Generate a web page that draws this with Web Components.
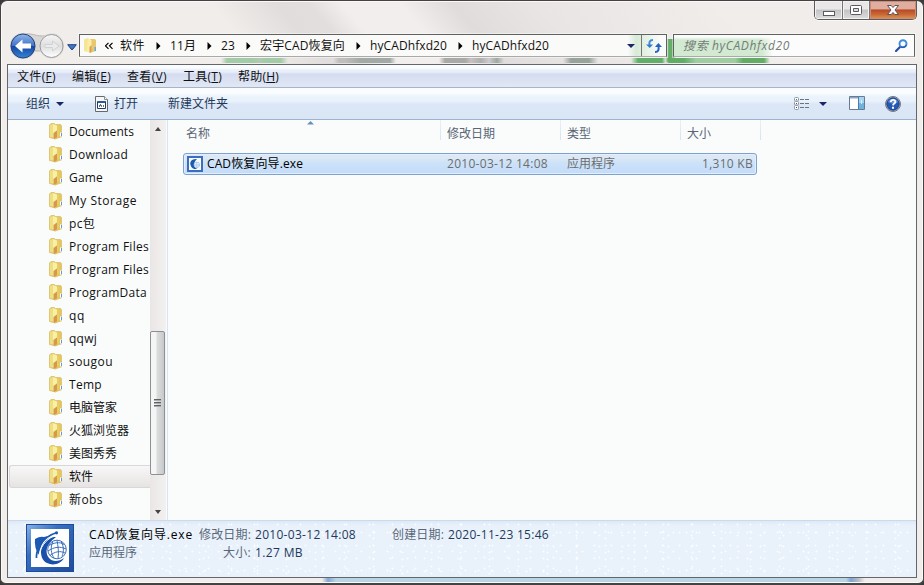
<!DOCTYPE html>
<html lang="zh-CN">
<head>
<meta charset="utf-8">
<title>hyCADhfxd20</title>
<style>
  html, body { margin: 0; height: 100%; background: #3b3a3b; overflow: hidden; }
  body { font: 12px/16px "Open Sans", "Noto Sans CJK SC", sans-serif; color: #111; }
</style>
</head>
<body>
<explorer-window>
  <title-bar></title-bar>
  <nav-row></nav-row>
  <client-area>
    <menu-bar></menu-bar>
    <command-bar></command-bar>
    <folder-tree slot="side"></folder-tree>
    <scroll-bar slot="side"></scroll-bar>
    <file-list slot="main"></file-list>
    <details-pane slot="foot"></details-pane>
  </client-area>
</explorer-window>

<script>
const define = (name, html, setup) => {
  customElements.define(name, class extends HTMLElement {
    constructor() {
      super();
      this.attachShadow({ mode: "open" });
    }

    connectedCallback() {
      this.shadowRoot.innerHTML = html.trim();
      if (setup) setup(this);
    }
  });
};

// label that spreads its letters over the width given in "w"
define("fit-text", `
  <style>:host { display: inline-block; white-space: pre; flex: none; justify-self: start; line-height: 16px; height: 16px; }</style><slot></slot>
`, (el) => {
  const w = parseFloat(el.getAttribute("w"));
  if (!w) return;
  const natural = el.getBoundingClientRect().width;
  el.style.letterSpacing = `${(w - natural) / el.textContent.length}px`;
});

const icons = {
  folder: [14, 17, `
    <path d="M.5 2 2 .5h3.500l1 1h5l1 1v11.500l-2.500.5-3.500 1.500L.5 14.500z" fill="#e3c460" stroke="#dcc067" stroke-width=".8"/>
    <path d="M1 2 4 1v13.500L1 14z" fill="#efdf83"/>
    <path d="M4 1 8 2.500v5L6.500 9v6.500L4 14.500z" fill="#f8f0a5"/>
    <path d="M4.500 10 8 7.500V14l-2.500 2-1-1z" fill="#d6994b"/>
    <path d="M8 2.500h2.500V13L8 14z" fill="#e9cc66"/>
    <path d="M11 9.500h1.500v4H11z" fill="#fff"/><path d="M12 10h1v3h-1z" fill="#5a9de0"/>`],
  openFolder: [14, 17, `
    <path d="M1 2.500 5 1v14l-4-1z" fill="#f5e596"/>
    <path d="M6 2h5.500l1.500 1v11l-5 1.500H6z" fill="#e8c86b"/>
    <path d="M5 1 8.500 3v6L7 16l-3-1.500z" fill="#faedaa"/>
    <path d="M6.500 10 8.500 8v7l-2 1z" fill="#d9a050"/>
    <path d="M11.500 10h1.500v4h-1.500z" fill="#66a7e4"/>`],
  app: [16, 16, `
    <rect width="16" height="16" fill="#3b6fbb"/><path d="M2 2h12v12H2z" fill="#f7fbff"/>
    <path d="M10 3C5 2.500 2.500 5.500 3.500 9s4 4.500 7 4C7.500 12 5.500 7 10 3z" fill="#1c5ab0"/>
    <circle cx="9.800" cy="8.800" r="2.800" fill="#e6effa" stroke="#a5c1e6" stroke-width=".8"/>
    <path d="M7 9h6M9.800 6v6" stroke="#9bbbe2" stroke-width=".6"/>`],
  appLarge: [48, 48, `
    <defs><linearGradient id="g" x2="1" y2="1"><stop stop-color="#87b1e4"/><stop offset=".35" stop-color="#376fc0"/><stop offset="1" stop-color="#1f4b9d"/></linearGradient></defs>
    <rect width="48" height="48" fill="#1d4b9c"/><rect x="1" y="1" width="46" height="46" fill="url(#g)"/>
    <path d="M5 5h38v38H5z" fill="#fff"/>
    <path d="M9 15q5-3 9-2l4-1q-8 8-9 19-5-7-4-16z" fill="#1c59b2"/>
    <path d="M31 8.500Q19 12 13.500 22 10 29 10.500 34" fill="none" stroke="#1c59b2" stroke-width="1.800"/>
    <path d="M30 13c-8-1-15 7-15 15 0 5 2 9 6 11 6 3 14 1 17-5-5 4-12 4-15 0-4-5-4-13 7-21z" fill="#1850aa"/>
    <path d="M28 12C19 16 14 24 13 32" fill="none" stroke="#fff" stroke-width="1"/>
    <circle cx="30.500" cy="8.800" r="1.600" fill="#1c59b2"/>
    <circle cx="31" cy="25.500" r="9.300" fill="#fff" stroke="#2861b5" stroke-width=".9"/>
    <g fill="none" stroke="#2861b5" stroke-width=".9">
      <path d="M23 21.500c5-3 11-4 15-1M22 27c6-4 12-5 18-2M24 31.500c5-4 10-5 15-2.500"/>
      <path d="M27 17.500c-3 6-2 12 1 16.500M31 16.500c1 5 2 12 1 18M35 17.500c3 5 3 10 1 15"/>
    </g>`],
  openFile: [15, 16, `
    <path d="M1.500.5h9l3 3v12h-12z" fill="#f5f6f7" stroke="#65696d"/><path d="M10.500.5v3h3" fill="#fff" stroke="#898d91"/>
    <path d="M3.500 5.500h8v7h-8z" fill="#fff" stroke="#243d65"/><path d="M4 5h7v2H4z" fill="#31598e"/>
    <path d="M5 9h1v2H5z" fill="#4771b9"/><path d="M6 8h1v2H6z" fill="#4771b9"/><path d="M7 9h1v2H7z" fill="#cd5a3d"/><path d="M9 9h1v2H9z" fill="#3c8b51"/>`],
  views: [17, 14, `
    <g fill="#fff" stroke="#8a98ab"><rect x=".5" y=".5" width="4" height="3.500" rx="1"/><rect x=".5" y="4.500" width="4" height="3.500" rx="1"/><rect x=".5" y="8.500" width="4" height="4" rx="1"/></g>
    <path d="M2 2h1v1H2z" fill="#36894b"/><path d="M2 6h1v1H2z" fill="#a33829"/><path d="M2 10h1v1H2z" fill="#294aa3"/>
    <path d="M6 2.500h4m1 0h4M6 6.500h4m1 0h4M6 10.500h4m1 0h4" stroke="#6a7584"/>`],
  preview: [17, 15, `
    <path d="M.5.5h15v13H.5z" fill="#fff" stroke="#687b94"/><path d="M1 1h9v2H1z" fill="#c9d4e2"/><path d="M1 1.500h9" stroke="#8ea5c4"/>
    <path d="M10 1h5v12h-5z" fill="#a5d5ef"/><path d="M10 7h5v6h-5z" fill="#6db3dc"/><path d="M9.500 1v12" stroke="#4f7ba9"/><path d="M12 4h1v4h-1z" fill="#d5eefa"/>`],
  help: [16, 16, `
    <circle cx="8" cy="8" r="7.500" fill="#c3cad3" stroke="#707984"/><circle cx="8" cy="8" r="6.200" fill="#2559b6" stroke="#173f86"/>
    <path d="M3 6a5.500 5.500 0 0 1 10 0c-3 2-6 2-10 0z" fill="#6791d8"/>
    <path d="M5.800 6c0-3 4.700-2.800 4.500-.1C10.200 7.600 8.100 7.300 8 9.400" fill="none" stroke="#fff" stroke-width="1.800"/><path d="M7 10.800h2v1.900H7z" fill="#fff"/>`],
  down: [8, 4, `<path d="M0 0h8L4 4z" fill="#17276a"/>`],
  refresh: [16, 14, `
    <path d="M7 1C3.500 1 3 3 3.500 7" fill="none" stroke="#438bd9" stroke-width="2"/><path d="M0 5.500h7L3.800 9z" fill="#347bd0"/>
    <path d="M9 13c3.500 0 4-2 3.500-6" fill="none" stroke="#2664c3" stroke-width="2"/><path d="M9 8h7l-3.700-4z" fill="#2461c0"/>`],
  search: [14, 13, `
    <path d="m1 12 5-5" stroke="#244caa" stroke-width="2.200" stroke-linecap="round"/><circle cx="8" cy="4.700" r="3.500" fill="#f6fbff" stroke="#4289d9" stroke-width="1.900"/>
    <path d="M5.700 7.600a3.600 3.600 0 0 0 5.500-1.500" fill="none" stroke="#2861b9" stroke-width="1.500"/>`],
  travel: [64, 28, `
    <defs><linearGradient id="b" x2="0" y2="1"><stop stop-color="#91b6e9"/><stop offset=".48" stop-color="#4275ca"/><stop offset=".52" stop-color="#1747a1"/><stop offset="1" stop-color="#3386d9"/></linearGradient>
    <linearGradient id="f" x2="0" y2="1"><stop stop-color="#f6f6f6"/><stop offset=".5" stop-color="#dedede"/><stop offset="1" stop-color="#fff"/></linearGradient></defs>
    <path d="M14 2c10-1 12 2 19 2s10-3 15-1v16H14z" fill="#d9d7d6" stroke="#b9b7b6"/>
    <circle cx="14" cy="14" r="13" fill="#c9cbd0"/><circle cx="14" cy="14" r="12" fill="url(#b)" stroke="#294474"/>
    <path d="M6 14 13.500 7.500v4H22v5h-8.500v4z" fill="#fff"/>
    <circle cx="42.500" cy="14" r="12.500" fill="#dcdad9"/>
    <circle cx="42.500" cy="14" r="11.500" fill="url(#f)" stroke="#9a9a9c"/>
    <path d="M50 14 43.500 9v3.500H36v3h7.500V19z" fill="#ecebeb" stroke="#d3d2d2"/>`],
  history: [10, 7, `<path d="M.7.7h8.600L6 5Q5 6.500 4 5z" fill="#3d79cb" stroke="#24417a"/>`],
  crumb: [5, 8, `<path d="M.5 0 4.500 4l-4 4z" fill="#000"/>`],
  more: [8, 8, `<path d="m3.500.8-3 3 3 3M7.500.8l-3 3 3 3" fill="none" stroke="#000" stroke-width="1.200"/>`],
  min: [12, 5, `<rect x=".5" y=".5" width="11" height="4" fill="#fff" stroke="#5a5a60"/>`],
  max: [12, 10, `<rect x=".5" y=".5" width="11" height="9" rx="1" fill="#fff" stroke="#5a5a60"/><path d="M3.500 3.500h5v3h-5z" fill="#ddd" stroke="#5a5a60"/>`],
  close: [12, 10, `<path d="M.5.500h3.700L6 2.500 7.800.500h3.700L8 5l3.500 4.500H7.800L6 7.500 4.200 9.500H.5L4 5z" fill="#fff" stroke="#5d5357"/>`]
};

customElements.define("ui-icon", class extends HTMLElement {
  constructor() {
    super();
    this.attachShadow({ mode: "open" });
  }

  connectedCallback() {
    const [w, h, body] = icons[this.getAttribute("name")];
    this.shadowRoot.innerHTML = `
      <style>:host { display: block; flex: none; width: ${w}px; height: ${h}px; } svg { display: block; }</style>
      <svg width="${w}" height="${h}" viewBox="0 0 ${w} ${h}">${body}</svg>`;
  }
});

define("explorer-window", `
  <style>
    :host {
      display: flex; flex-direction: column; box-sizing: border-box; width: 924px; height: 585px;
      border: 1px solid #444243; border-bottom-width: 2px; border-radius: 7px 7px 6px 6px; overflow: hidden;
      box-shadow: inset 0 0 0 1px #fbf9f8;
      background:
        linear-gradient(90deg, transparent 321px, #85a6cf 327px, #b9d5e5 335px, #b9d5e5 845px, #7da5d3 850px, #c0c0c4 858px, transparent 864px) 0 577px / 922px 5px no-repeat,
        linear-gradient(50deg, transparent 200px, #e1dddc 250px, #e2dedd 275px, #f1eeed 300px, #f1eeed 345px, #dfdcdb 385px, #e9e5e4 450px, transparent 590px) 0 0 / 100% 64px no-repeat,
        #f0edeb;
    }
  </style>
  <slot></slot>
`);

define("title-bar", `
  <style>
    :host { display: flex; justify-content: flex-end; align-items: flex-start; height: 33px; padding-right: 6px; }
    .buttons { display: flex; box-sizing: border-box; height: 19px; width: 103px; border: 1px solid #5d5a5c; border-top: 0; border-radius: 0 0 5px 5px; overflow: hidden; box-shadow: 0 1px #faf8f7; }
    .buttons div { display: flex; align-items: center; justify-content: center; width: 27px; border-right: 1px solid #77747a; background: linear-gradient(#e9e7e7 0 45%, #c3c3c5 50%, #dedddd); box-shadow: inset 0 0 0 1px #f3f2f2; }
    .buttons div:nth-child(2) { width: 26px; }
    .buttons .close { flex: 1; border: 0; background: linear-gradient(#dfae9e 0 43%, #b94a28 50%, #c96935 75%, #dd9656); box-shadow: inset 0 0 0 1px #d28a73; }
    .low { margin-top: 6px; }
  </style>
  <div class="buttons">
    <div><ui-icon name="min" class="low"></ui-icon></div>
    <div><ui-icon name="max"></ui-icon></div>
    <div class="close"><ui-icon name="close"></ui-icon></div>
  </div>
`);

define("nav-row", `
  <style>
    :host {
      display: flex; height: 30px; padding: 0 7px 0 8px;
      background:
        linear-gradient(90deg, transparent 220px, #a2cba8 226px 250px, #b1c9b1 258px, #a2cba8 266px 280px, transparent 287px) 0 24px / 100% 5px no-repeat,
        linear-gradient(90deg, transparent 332px, #c0bebd 338px 344px, #a1aaa5 360px 389px, transparent 395px, transparent 438px, #a9a9a8 444px 464px, #c6c2c1 470px, #aeb0ae 480px, #ccc 488px, #a0a8a2 496px, transparent 503px, transparent 562px, #98a39c 570px 588px, transparent 597px, transparent 630px, #61af68 637px 661px, transparent 665px, #61ad66 668px 683px, #9fcca1 695px 734px, #61ad66 742px 763px, transparent 769px) 0 24px / 100% 5px no-repeat,
        linear-gradient(90deg, transparent 664px, #65ae69 668px 673px, transparent 675px) 0 5px / 100% 23px no-repeat;
    }
    .history { margin: 10px 0 0 -6px; }
    .travel { margin-top: -2px; }
    .address, .search { display: flex; align-items: center; box-sizing: border-box; height: 23px; border: 1px solid #5f6260; border-bottom-color: #aaa; box-shadow: 0 0 0 1px rgba(255,255,255,.45); background: #fafaf8; }
    .address { width: 588px; margin-left: 2px; padding-left: 3px; background: linear-gradient(90deg, transparent 548px, #d7ead7 556px, #e2f1e2 564px, #fafbfa 580px), #fafaf8; }
    .more { margin: 0 7px 0 8px; }
    .address fit-text { margin-right: 11px; }
    .crumb { margin-right: 9px; }
    .drop { margin-left: auto; margin-right: 6px; }
    .refresh { display: flex; align-items: center; justify-content: center; align-self: stretch; width: 24px; border-left: 1px solid #777; }
    .search { width: 242px; margin-left: 6px; padding: 0 5px 0 9px; color: #747c77; font-style: italic; background: linear-gradient(#fcfcfc 2px, transparent 5px), linear-gradient(90deg, #d2e9d2 88px, #fcfcfc 99px); }
    .search ui-icon { margin-left: auto; }
  </style>
  <ui-icon name="travel" class="travel"></ui-icon>
  <ui-icon name="history" class="history"></ui-icon>
  <div class="address">
    <ui-icon name="openFolder"></ui-icon>
    <ui-icon name="more" class="more"></ui-icon>
    <fit-text w="25">软件</fit-text><ui-icon name="crumb" class="crumb"></ui-icon>
    <fit-text w="26">11月</fit-text><ui-icon name="crumb" class="crumb"></ui-icon>
    <fit-text w="14">23</fit-text><ui-icon name="crumb" class="crumb"></ui-icon>
    <fit-text w="85">宏宇CAD恢复向</fit-text><ui-icon name="crumb" class="crumb"></ui-icon>
    <fit-text w="77">hyCADhfxd20</fit-text><ui-icon name="crumb" class="crumb"></ui-icon>
    <fit-text w="77">hyCADhfxd20</fit-text>
    <ui-icon name="down" class="drop"></ui-icon>
    <div class="refresh"><ui-icon name="refresh"></ui-icon></div>
  </div>
  <div class="search"><fit-text w="107">搜索 hyCADhfxd20</fit-text><ui-icon name="search"></ui-icon></div>
`);

define("client-area", `
  <style>
    :host { display: flex; flex-direction: column; box-sizing: border-box; width: 910px; height: 514px; margin-left: 6px; border: 1px solid #62676d; background: #fafcfc; }
    .body { display: flex; height: 400px; }
    .side { display: flex; box-sizing: border-box; width: 160px; border-right: 1px solid #d6e4f5; }
  </style>
  <slot></slot>
  <div class="body"><div class="side"><slot name="side"></slot></div><slot name="main"></slot></div>
  <slot name="foot"></slot>
`);

define("menu-bar", `
  <style>
    :host { display: flex; align-items: center; gap: 16px; box-sizing: border-box; height: 23px; padding: 2px 0 0 9px; border-bottom: 1px solid #a9b4c8; background: linear-gradient(#fbfcfe 0 3px, #e9effa 5px 7px, #d5dcef 9px, #dbe3f3 16px, #e0e8f6); }
    u { text-underline-offset: 1px; }
  </style>
  <fit-text w="39">文件(<u>F</u>)</fit-text>
  <fit-text w="39">编辑(<u>E</u>)</fit-text>
  <fit-text w="40">查看(<u>V</u>)</fit-text>
  <fit-text w="39">工具(<u>T</u>)</fit-text>
  <fit-text w="41">帮助(<u>H</u>)</fit-text>
`);

define("command-bar", `
  <style>
    :host { display: flex; align-items: center; box-sizing: border-box; height: 32px; padding: 0 15px 0 18px; color: #1e395b; border-bottom: 1px solid #a0b3cc; background: linear-gradient(#fafdff 0 5px, #eaf2fb 9px 13px, #dce7f6 16px, #d9e6f6); }
    fit-text { padding-top: 1px; }
    .down { margin-left: 6px; }
    .file { margin: 0 5px 0 30px; }
    .new { margin-left: 30px; }
    .right { display: flex; align-items: center; margin-left: auto; }
    .right .down { margin: 0 22px 0 8px; }
    .help { margin-left: 19px; }
  </style>
  <fit-text w="24">组织</fit-text><ui-icon name="down" class="down"></ui-icon>
  <ui-icon name="openFile" class="file"></ui-icon><fit-text w="24">打开</fit-text>
  <fit-text w="60" class="new">新建文件夹</fit-text>
  <div class="right">
    <ui-icon name="views"></ui-icon><ui-icon name="down" class="down"></ui-icon>
    <ui-icon name="preview"></ui-icon><ui-icon name="help" class="help"></ui-icon>
  </div>
`);

const folders = [
  ["Documents", 65], ["Download", 59], ["Game", 34], ["My Storage", 68], ["pc包", 26],
  ["Program Files", 80], ["Program Files", 80], ["ProgramData", 78], ["qq", 16], ["qqwj", 28],
  ["sougou", 44], ["Temp", 33], ["电脑管家", 48], ["火狐浏览器", 60], ["美图秀秀", 48],
  ["软件", 24], ["新obs", 34]
];

define("folder-tree", `
  <style>
    :host { display: block; width: 142px; overflow: hidden; }
    div { display: flex; align-items: center; box-sizing: border-box; height: 23px; margin-left: 1px; padding-left: 39px; border: 1px solid transparent; border-right: 0; }
    .selected { border-color: #d9d7d7; border-radius: 3px 0 0 3px; background: linear-gradient(#f8f7f7, #e7e3e3); }
    ui-icon { margin-right: 6px; }
  </style>
  ${folders.map(([name, w]) => `<div${name === "软件" ? ' class="selected"' : ""}><ui-icon name="folder"></ui-icon><fit-text w="${w}">${name}</fit-text></div>`).join("")}
`);

define("scroll-bar", `
  <style>
    :host { display: flex; flex-direction: column; align-items: center; width: 16px; background: linear-gradient(90deg, #e9e6e5, #f3f1f0); }
    .up, .down { width: 0; border: 3px solid transparent; }
    .up { margin-top: 4px; border-bottom: 4px solid #444; }
    .down { margin-top: auto; margin-bottom: 3px; border-top: 4px solid #444; }
    .thumb { display: flex; flex-direction: column; align-items: center; justify-content: center; align-self: flex-start; gap: 1px; box-sizing: border-box; width: 15px; height: 144px; margin-top: 200px; padding-right: 1px; border: 1px solid #8e9191; border-radius: 2px; background: linear-gradient(90deg, #f5f5f5 0 35%, #dadbdb 50%, #c6c9cb); }
    .thumb i { width: 7px; height: 2px; background: linear-gradient(#5e6265 50%, #a9adb0 50%); }
  </style>
  <div class="up"></div>
  <div class="thumb"><i></i><i></i><i></i></div>
  <div class="down"></div>
`);

define("file-list", `
  <style>
    :host { display: block; flex: 1; color: #596575; }
    .head, .row { display: grid; align-items: center; }
    .head { position: relative; grid-template-columns: 273px 120px 120px 80px; height: 20px; }
    .head div { padding: 6px 0 0 6px; box-sizing: border-box; border-right: 1px solid; border-image: linear-gradient(#e9f0fa, #d6e2f3) 1; height: 20px; }
    .head div:first-child { padding-left: 18px; }
    .sort { position: absolute; left: 139px; top: 0; }
    .row { grid-template-columns: 263px 120px 1fr 60px; box-sizing: border-box; width: 574px; height: 22px; margin: 13px 0 0 15px; border: 1px solid #7da2ce; border-radius: 3px; box-shadow: inset 0 0 0 1px #e3effd; background: linear-gradient(#dce8f6 0 20%, #cce2f8 45%, #c3dcfb); color: #6d6d6d; }
    .name { display: flex; align-items: center; gap: 4px; padding-left: 3px; color: #000; }
    .size { justify-self: end; margin-right: 3px; }
  </style>
  <div class="head">
    <div><fit-text w="24">名称</fit-text></div>
    <div><fit-text w="48">修改日期</fit-text></div>
    <div><fit-text w="24">类型</fit-text></div>
    <div><fit-text w="24">大小</fit-text></div>
    <svg class="sort" width="7" height="5"><path d="M0 4.500 3.500 1 7 4.500z" fill="#6291bd"/></svg>
  </div>
  <div class="row">
    <div class="name"><ui-icon name="app"></ui-icon><fit-text w="96">CAD恢复向导.exe</fit-text></div>
    <fit-text w="101">2010-03-12 14:08</fit-text>
    <fit-text w="48">应用程序</fit-text>
    <fit-text w="51" class="size">1,310 KB</fit-text>
  </div>
`);

define("details-pane", `
  <style>
    :host { display: flex; box-sizing: border-box; flex: 1; padding: 3px 0 0 18px; border-top: 1px solid #ccd9ea; color: #5a6779;
      background:
        radial-gradient(circle, #fbfdff 0 .7px, transparent 1.2px) 0 5px / 17px 13px,
        radial-gradient(circle, #fbfdff 0 .7px, transparent 1.2px) 5px 9px / 23px 11px,
        radial-gradient(circle, #fbfdff 0 .7px, transparent 1.2px) 9px 2px / 13px 19px,
        radial-gradient(circle, #fbfdff 0 .7px, transparent 1.2px) 3px 7px / 29px 7px,
        linear-gradient(#dfe9f7, #e9f2fb 5px); }
    .grid { display: grid; grid-template-columns: 110px 56px 137px 56px auto; grid-template-rows: 18px 18px; margin: 3px 0 0 15px; }
    .name { color: #000; }
    .value { color: #1e395b; }
    .end { justify-self: end; margin-right: 4px; }
  </style>
  <ui-icon name="appLarge"></ui-icon>
  <div class="grid">
    <fit-text w="104" class="name">CAD恢复向导.exe</fit-text>
    <fit-text w="52">修改日期:</fit-text>
    <fit-text w="101" class="value">2010-03-12 14:08</fit-text>
    <fit-text w="52">创建日期:</fit-text>
    <fit-text w="101" class="value">2020-11-23 15:46</fit-text>
    <fit-text w="48">应用程序</fit-text>
    <fit-text w="28" class="end">大小:</fit-text>
    <fit-text w="48" class="value">1.27 MB</fit-text>
  </div>
`);
</script>
</body>
</html>
